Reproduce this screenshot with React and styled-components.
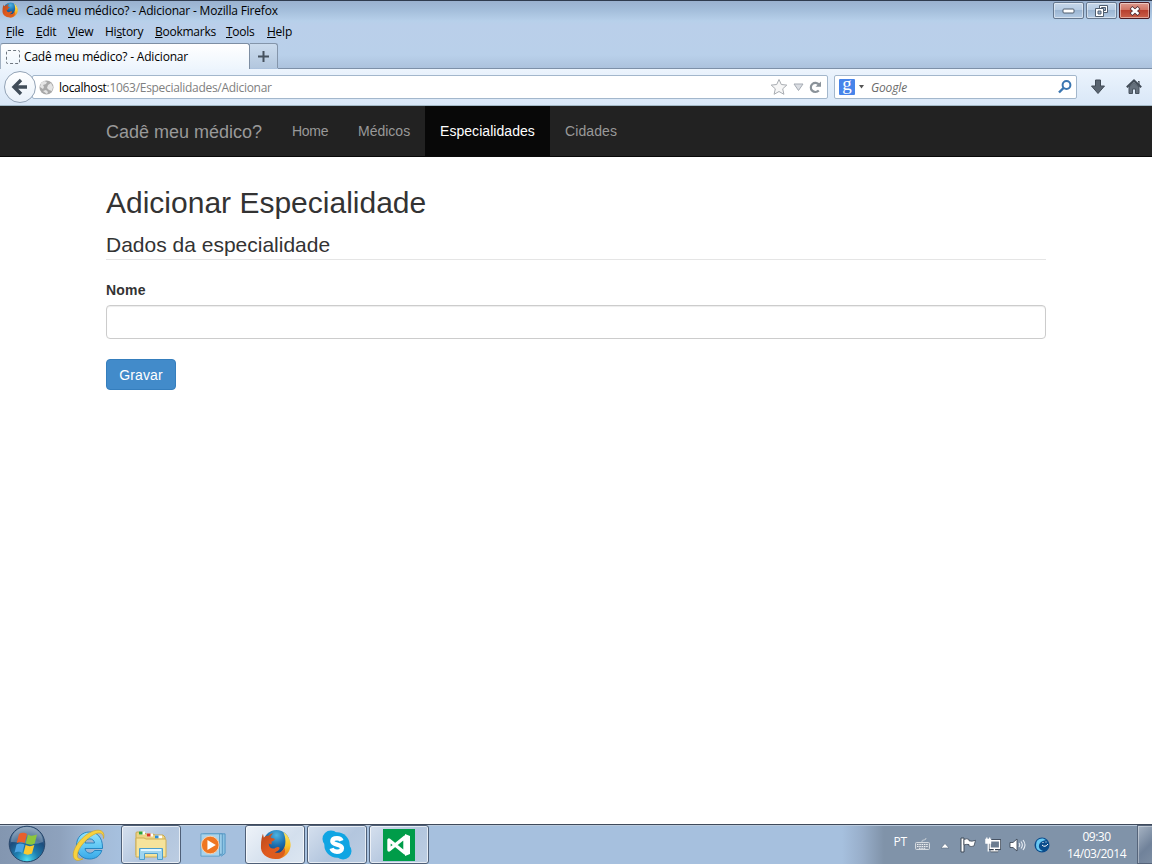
import React from "react";
import styled, { createGlobalStyle, css } from "styled-components";

const uiFont = '"Open Sans", "Noto Sans", sans-serif';
const pageFont = '"Liberation Sans", Arial, sans-serif';

const GlobalStyle = createGlobalStyle`
  * { box-sizing: border-box; }
  body { margin: 0; overflow: hidden; background: #fff; }
  svg { display: block; flex: none; }
`;

const Screen = styled.div`
  width: 1152px;
  height: 864px;
  display: flex;
  flex-direction: column;
  font-family: ${uiFont};
  font-size: 12px;
  color: #000;
  background: #fff;
`;

const Chrome = styled.header`
  height: 69px;
  flex: none;
  display: flex;
  flex-direction: column;
  border-top: 1px solid #2f3b4e;
  background: linear-gradient(#9ab1cf 0, #a2bcd9 8px, #b7d0ea 20px, #bacfea 24px, #b9d0ea 54px, #abc1dc 68px);
`;

const TitleBar = styled.div`
  height: 21px;
  display: flex;
  align-items: flex-start;
  padding: 1px 2px 0;
`;

const Text = styled.span`
  white-space: nowrap;
  font-size: 12px;
  letter-spacing: ${(p) => p.$track ?? -0.18}px;
  line-height: 16px;
`;

const WindowTitle = styled(Text)`
  margin: 1px auto 0 8px;
`;

const WindowButtons = styled.div`
  display: flex;
  gap: 2px;
`;

const WindowButton = styled.div`
  width: 31px;
  height: 17px;
  display: flex;
  align-items: center;
  justify-content: center;
  border: 1px solid ${(p) => (p.$close ? "#4c1b22" : "#66788f")};
  border-radius: 2px;
  box-shadow: inset 0 0 0 1px rgba(255, 255, 255, 0.45);
  background: ${(p) =>
    p.$close
      ? "linear-gradient(#dd9a8e 0, #cf7261 48%, #b8402f 50%, #c9604a 100%)"
      : "linear-gradient(#c6d7ea 0, #b4cae2 48%, #9cb6d3 50%, #b3cae3 100%)"};
`;

const MenuBar = styled.nav`
  height: 21px;
  display: flex;
  align-items: center;
  padding: 0 0 2px 6px;
`;

const MenuItem = styled(Text)`
  width: ${(p) => p.$width}px;
  u { text-underline-offset: 1px; text-decoration-thickness: 1px; }
`;

const TabStrip = styled.div`
  height: 26px;
  display: flex;
  align-items: stretch;
`;

const Tab = styled.div`
  width: 250px;
  display: flex;
  align-items: center;
  padding: 1px 0 0 5px;
  gap: 4px;
  border: 1px solid #7d8ea3;
  border-left-color: #a2b1c3;
  border-bottom: 0;
  border-radius: 3px 3px 0 0;
  background: linear-gradient(#fff, #edf5fd);
`;

const Favicon = styled.div`
  width: 14px;
  height: 14px;
  border: 1px dashed #6f7780;
  border-radius: 2px;
`;

const NewTab = styled.div`
  width: 28px;
  height: 25px;
  display: flex;
  align-items: center;
  justify-content: center;
  border: 1px solid #8495aa;
  border-left: 0;
  border-bottom: 0;
  border-radius: 0 3px 0 0;
  background: linear-gradient(#cbdbed, #b3c7de);
`;

const Toolbar = styled.div`
  height: 37px;
  flex: none;
  display: flex;
  align-items: center;
  padding: 0 10px 0 4px;
  background: linear-gradient(#ecf4fd, #d9e7f7);
  border-bottom: 1px solid #a3b9c6;
  background-clip: padding-box;
`;

const ChromeEdge = styled.div`
  height: 1px;
  margin: -1px 0 0 278px;
  background: #7d90a8;
`;

const BackButton = styled.div`
  width: 32px;
  height: 32px;
  flex: none;
  z-index: 1;
  display: flex;
  align-items: center;
  justify-content: center;
  border: 1px solid #93a3b6;
  border-radius: 50%;
  background: linear-gradient(#fff, #e9f1fa);
`;

const Field = styled.div`
  height: 24px;
  display: flex;
  align-items: center;
  border: 1px solid #a3b7cc;
  border-radius: 2px;
  background: #fff;
`;

const UrlField = styled(Field)`
  width: 796px;
  margin-left: -4px;
  padding: 0 3px 0 6px;
  color: #808080;
  b { font-weight: 400; color: #000; }
`;

const UrlText = styled(Text)`
  margin: 2px auto 0 5px;
`;

const SearchField = styled(Field)`
  width: 243px;
  margin-left: 6px;
  padding: 0 4px;
`;

const SearchHint = styled(Text)`
  margin: 2px auto 0 7px;
  font-style: italic;
  color: #6b6b6b;
`;

const EngineBadge = styled.span`
  width: 16px;
  height: 16px;
  margin-right: 4px;
  border-radius: 1px;
  background: #4784ea;
  color: #fff;
  font: 19px/10px "Liberation Serif", serif;
  text-align: center;
`;

const ToolbarIcons = styled.div`
  display: flex;
  gap: 20px;
  margin-left: auto;
`;

const Navbar = styled.nav`
  height: 51px;
  flex: none;
  display: flex;
  padding-left: 106px;
  background: #222;
  border-bottom: 1px solid #080808;
  font-family: ${pageFont};
  color: #999;
`;

const Brand = styled.span`
  width: 171px;
  font-size: 18px;
  line-height: 52px;
  height: 50px;
  white-space: nowrap;
`;

const NavItem = styled.span`
  padding: 0 15px;
  width: ${(p) => p.$width}px;
  font-size: 14px;
  line-height: 50px;
  letter-spacing: ${(p) => p.$track || 0}px;
  white-space: nowrap;
  ${(p) => p.$active && css`background: #080808; color: #fff;`}
`;

const Page = styled.main`
  flex: 1;
  padding: 29px 106px 0;
  font-family: ${pageFont};
  color: #333;
`;

const Heading = styled.h2`
  margin: 0 0 10px;
  font-size: 30px;
  font-weight: 400;
  line-height: 33px;
`;

const Legend = styled.div`
  height: 31px;
  margin-bottom: 20px;
  padding-top: 1px;
  font-size: 21px;
  line-height: 30px;
  border-bottom: 1px solid #e5e5e5;
`;

const Label = styled.label`
  display: block;
  margin-bottom: 5px;
  font-size: 14px;
  font-weight: 700;
  line-height: 20px;
  letter-spacing: 0.2px;
`;

const Input = styled.input`
  display: block;
  width: 100%;
  height: 34px;
  padding: 6px 12px;
  border: 1px solid #ccc;
  border-radius: 4px;
  box-shadow: inset 0 1px 1px rgba(0, 0, 0, 0.075);
`;

const SubmitButton = styled.button`
  width: 70px;
  height: 31px;
  margin-top: 20px;
  padding: 0;
  border: 1px solid #357ebd;
  border-radius: 4px;
  background: #428bca;
  color: #fff;
  font: 14px/20px ${pageFont};
  letter-spacing: 0.15px;
`;

const Taskbar = styled.footer`
  height: 40px;
  flex: none;
  display: flex;
  border-top: 1px solid #3f4a5b;
  box-shadow: inset 0 1px 0 #b9c9db;
  background: linear-gradient(90deg, #8396b0 0, #8ea2bd 60px, #a3bbd8 100px, #a6c0de 120px, #a6c0de 842px, #98aeca 862px, #8093a9 884px, #8093a9 100%);
`;

const TaskSlot = styled.div`
  width: 60px;
  margin-right: 2px;
  display: flex;
  align-items: center;
  justify-content: center;
  ${(p) =>
    p.$open &&
    css`
      border: 1px solid #4f6078;
      border-radius: 3px;
      box-shadow: inset 0 0 0 1px rgba(255, 255, 255, 0.65);
      background: ${p.$active
        ? "linear-gradient(135deg, #eef3f9, #d3dfed 60%, #dce6f1)"
        : "linear-gradient(135deg, #d5e0ee, #b3c6de 55%, #bccde2)"};
    `}
`;

const StartSlot = styled.div`
  width: 59px;
  padding: 0 0 0 8px;
`;

const Tray = styled.div`
  display: flex;
  align-items: center;
  margin-left: auto;
  color: #fff;
`;

const Language = styled(Text)`
  margin-bottom: 5px;
`;

const TrayIcons = styled.div`
  display: flex;
  align-items: center;
  gap: 8px;
  margin: 0 7px 0 8px;
`;

const Clock = styled.div`
  width: 80px;
  display: flex;
  flex-direction: column;
  align-items: center;
  padding: 2px 1px 0 0;
  gap: 1px;
`;

const ShowDesktop = styled.div`
  width: 15px;
  align-self: stretch;
  border: 1px solid #55647a;
  border-right: 0;
  box-shadow: inset 1px 1px 0 rgba(255, 255, 255, 0.35);
  background: linear-gradient(135deg, #a7b4c4, #70829a 60%, #7c8da3);
`;

const FirefoxIcon = ({ size }) => (
  <svg width={size} height={size} viewBox="0 0 32 32">
    <defs>
      <radialGradient id="globe" cx=".5" cy=".2" r=".75">
        <stop offset="0" stopColor="#4db4e2" />
        <stop offset=".5" stopColor="#1d70b0" />
        <stop offset="1" stopColor="#123a73" />
      </radialGradient>
      <linearGradient id="fox" x1="0" y1="0" x2="1" y2="1">
        <stop offset="0" stopColor="#b8481c" />
        <stop offset=".5" stopColor="#e05a1f" />
        <stop offset="1" stopColor="#d9601c" />
      </linearGradient>
      <linearGradient id="flame" x1="0" y1="0" x2="0" y2="1">
        <stop offset="0" stopColor="#ffe866" />
        <stop offset=".5" stopColor="#fbc62a" />
        <stop offset="1" stopColor="#e8701b" />
      </linearGradient>
    </defs>
    <circle cx="17" cy="14.500" r="13.500" fill="url(#globe)" />
    <path d="M24 3c6 4 9 11 7 17-2 7-8 11-15 11l-3-4c8-1 12-5 13-11 .6-5 0-9-2-13z" fill="url(#flame)" />
    <path d="M3 5l1 4c1-1.500 3-2.500 5-2 1-1.500 3-2.500 5-2.500-2 1.500-3 3-3 4.500l4 1c1 1-1 2-3 3v3l-3-1c0 4 3 6 6 5 2-1 3-2 5-1 1 1-1 4-5 5 5 2 9-1 10-5 3 6-2 12-9 12C7 31 0 25 1 17c0-5 1-9 2-12z" fill="url(#fox)" />
  </svg>
);

const StartOrb = () => (
  <svg width="38" height="38" viewBox="0 0 38 38">
    <defs>
      <radialGradient id="orb" cx=".5" cy=".95" r=".9">
        <stop offset="0" stopColor="#4fe0f2" />
        <stop offset=".35" stopColor="#1e7fb0" />
        <stop offset=".7" stopColor="#1d4c7c" />
        <stop offset="1" stopColor="#6d8aa8" />
      </radialGradient>
    </defs>
    <circle cx="19" cy="19" r="17.800" fill="url(#orb)" stroke="#27466a" />
    <path d="M3 17a16 15 0 0 1 32 0c-9 4-22 0-32 0z" fill="#fff" opacity=".25" />
    <path d="M11 9c3-2 6-1 8 0l-2.300 9c-3-1.300-5-1.300-8 0z" fill="#e9602c" />
    <path d="M20 9.500c3 2 6 1 9 0l-2.300 9c-3 2-6 1-9 0z" fill="#8cc63e" />
    <path d="M8.500 19.500c3-1.500 5.500-1 8 0l-2.300 8.500c-2-1-4.500-2-7.700 0z" fill="#4ba3e2" />
    <path d="M17.600 20c3 1.500 5.500 1.500 8.700 0L24 28.500c-3 1.500-5.500 1.500-8.500 0z" fill="#fbc92f" />
  </svg>
);

const ExplorerE = () => (
  <svg width="34" height="34" viewBox="0 0 34 34">
    <defs>
      <linearGradient id="ie" x1="0" y1="2" x2="0" y2="32" gradientUnits="userSpaceOnUse">
        <stop offset=".1" stopColor="#93e3fb" />
        <stop offset=".6" stopColor="#5cc4f4" />
        <stop offset="1" stopColor="#35a6e6" />
      </linearGradient>
    </defs>
    <path fillRule="evenodd" d="M4.500 17.500C4.500 9.500 10 4 17.500 4S30.500 9.500 30.500 19v1.500H13c.5 5 7 6.500 9.500 2h7.300C28 28 23.500 31 17.500 31 10 31 4.500 25.500 4.500 17.500zM13 15h9.500c-.5-5.500-9-5.500-9.500 0z" fill="url(#ie)" stroke="#1d7fbd" strokeWidth=".9" />
    <path d="M31.500 10.500C34 1.500 25-1 14 7 3 15.500-1.500 27 3 31.500c2 1.700 5 1 8-.7-4 .8-6.300-.8-5.500-4.800 1-6 8-14.500 15.500-19 6-3.500 10.500-2.500 10.500 3.500z" fill="#f8d23f" stroke="#cf9f20" strokeWidth=".6" />
  </svg>
);

const FolderIcon = () => (
  <svg width="34" height="30" viewBox="0 0 34 30">
    <path d="M2 3q0-1 1-1h7l2 2h7l2 1h8l2 2v18H2z" fill="#ecd384" stroke="#c9a850" />
    <path d="M5 3h6M13 5h6M21 7h7" stroke="#fff" strokeWidth="3" />
    <path d="M5 3h3.500" stroke="#2ca33a" strokeWidth="3" />
    <path d="M13 5h3.500" stroke="#d8392b" strokeWidth="3" />
    <path d="M21 7h3.500" stroke="#2f8fd8" strokeWidth="3" />
    <path d="M2 8h8l2 1h19q1 0 1 1v17H2z" fill="#f6e39b" stroke="#cfae55" />
    <path d="M5.500 29.500V18.500h23v11h-5v-6h-13v6z" fill="#9fd5f0" stroke="#4d9fcd" />
    <path d="M7 20h20" stroke="#e2f6ff" strokeWidth="2" />
  </svg>
);

const MediaIcon = () => (
  <svg width="28" height="26" viewBox="0 0 28 28">
    <path d="M5 2h22v21l-4 3z" fill="#8cc4e4" stroke="#4f93c2" />
    <path d="M3 2h21v22H3z" fill="#9bcde9" stroke="#5594bf" />
    <path d="M1 2h20v24H1z" fill="#a9d3ec" stroke="#5f9fc7" />
    <circle cx="11" cy="14" r="9.500" fill="#ef7622" stroke="#fbd2ae" />
    <path d="M8 8.500v11l9-5.500z" fill="#fff" />
  </svg>
);

const SkypeIcon = () => (
  <svg width="30" height="30" viewBox="0 0 32 32">
    <circle cx="9.500" cy="9.500" r="9" fill="#10a5e3" />
    <circle cx="22.500" cy="22.500" r="9" fill="#10a5e3" />
    <circle cx="16" cy="16" r="13.500" fill="#10a5e3" />
    <path d="M20.800 11.500C20 9.200 18 8.800 16 8.800c-3 0-5 1.200-5 3.200 0 4.800 10.300 2.500 10.300 7.500 0 2.500-2.500 3.700-5.300 3.700s-5-.8-5.800-3.500" fill="none" stroke="#fff" strokeWidth="4.600" />
  </svg>
);

const StudioIcon = () => (
  <svg width="32" height="32" viewBox="0 0 32 32">
    <path d="M0 0h32v32H0z" fill="#009c49" />
    <path d="M6 11v10L22 8v16z" fill="none" stroke="#fff" strokeWidth="3.400" strokeLinejoin="round" />
    <path d="M22 5l5 2v18l-5 2z" fill="#fff" />
  </svg>
);

const TrayGlyphs = () => (
  <TrayIcons>
    <svg width="16" height="13" viewBox="0 0 16 13">
      <path d="M7 4.500V3q0-1 2-1t2-2" fill="none" stroke="#c5ccd4" />
      <rect x=".5" y="4.500" width="14" height="7" rx="1" fill="#8d9aaa" stroke="#d4dae0" />
      <path d="M2 6.500h11M2 8.500h11M4 10.300h7" stroke="#eef1f4" strokeDasharray="1.500 .8" />
    </svg>
    <svg width="12" height="8" viewBox="0 0 12 8"><path d="M2 7l4-4.500L10 7z" fill="#fff" stroke="#59697d" strokeWidth=".6" /></svg>
    <svg width="17" height="16" viewBox="-1 0 17 16">
      <path d="M1 1h3v14H1z" fill="#fff" stroke="#3d4857" />
      <path d="M4 2.500q3-1.500 5 0v1.300q3 1 6.500-.5L14 9q-3 1-5 0V7.500Q6 7 4 8z" fill="#fff" stroke="#3d4857" strokeWidth=".8" />
    </svg>
    <svg width="17" height="17" viewBox="-1 0 18 17">
      <path d="M5.500 4.500h10v8h-10zM10 12.500V15M6 15.300h8" fill="#6b7c90" stroke="#333e4c" strokeWidth="3" />
      <path d="M5.500 4.500h10v8h-10zM10 12.500V15M6 15.300h8" fill="#6b7c90" stroke="#fff" strokeWidth="1.400" />
      <path d="M1 3h5v4H1zM2 3V1M5 3V1M3.500 7v9" fill="#fff" stroke="#fff" strokeWidth="1.300" />
    </svg>
    <svg width="17" height="16" viewBox="0 0 17 16">
      <path d="M1 5.500h3L8 2v12l-4-3.500H1z" fill="#fff" stroke="#333e4c" strokeWidth=".8" />
      <path d="M10 6q1.500 2 0 4M12 4.500q2.700 3.500 0 7M14 3q4 5 0 10" fill="none" stroke="#e7edf4" strokeWidth="1.100" />
    </svg>
    <svg width="16" height="16" viewBox="0 0 16 16">
      <circle cx="8" cy="8" r="7.500" fill="#0a4c8c" />
      <path d="M9 1.500Q2 1 2 8t7 6Q4 12 5 8t7-5z" fill="#69c8f2" />
      <path d="M8 8q3 3 6-1" fill="none" stroke="#fff" />
      <path d="M9 5v1M12 4.500v1" stroke="#fff" />
    </svg>
  </TrayIcons>
);

const menus = [
  ["", "F", "ile", 30],
  ["", "E", "dit", 32],
  ["", "V", "iew", 37],
  ["Hi", "s", "tory", 50],
  ["", "B", "ookmarks", 71],
  ["", "T", "ools", 41],
  ["", "H", "elp", 40],
];

export default function App() {
  return (
    <Screen>
      <GlobalStyle />
      <Chrome>
        <TitleBar>
          <FirefoxIcon size={16} />
          <WindowTitle>Cadê meu médico? - Adicionar - Mozilla Firefox</WindowTitle>
          <WindowButtons>
            <WindowButton>
              <svg width="13" height="6"><rect x="1" y="1" width="11" height="4" rx="1" fill="#fff" stroke="#4f5d6e" /></svg>
            </WindowButton>
            <WindowButton>
              <svg width="13" height="12" viewBox="0 0 13 12">
                <path d="M4.500.5h8v7h-8z" fill="#fff" stroke="#4f5d6e" />
                <path d="M6.500 2.500h4v3h-4z" fill="#9cb3cf" stroke="#4f5d6e" />
                <path d="M.5 3.500h8v8h-8z" fill="#fff" stroke="#4f5d6e" />
                <path d="M3 6h3v3H3z" fill="#9cb3cf" stroke="#4f5d6e" />
              </svg>
            </WindowButton>
            <WindowButton $close>
              <svg width="12" height="10" viewBox="0 0 12 10">
                <path d="M2 1.500l8 7M10 1.500l-8 7" stroke="#4b2a31" strokeWidth="4" />
                <path d="M2.500 2l7 6M9.500 2l-7 6" stroke="#fff" strokeWidth="2.400" />
              </svg>
            </WindowButton>
          </WindowButtons>
        </TitleBar>
        <MenuBar>
          {menus.map(([before, key, after, width]) => (
            <MenuItem key={after} $width={width} $track={-0.25}>{before}<u>{key}</u>{after}</MenuItem>
          ))}
        </MenuBar>
        <TabStrip>
          <Tab>
            <Favicon />
            <Text>Cadê meu médico? - Adicionar</Text>
          </Tab>
          <NewTab>
            <svg width="11" height="11"><path d="M5.500 0v11M0 5.500h11" stroke="#46525f" strokeWidth="2" /></svg>
          </NewTab>
        </TabStrip>
        <ChromeEdge />
      </Chrome>
      <Toolbar>
        <BackButton>
          <svg width="18" height="18" viewBox="0 0 18 18">
            <path d="M10 2L3 9l7 7M3.500 9H16" fill="none" stroke="#414d59" strokeWidth="3.400" />
          </svg>
        </BackButton>
        <UrlField>
          <svg width="15" height="15" viewBox="0 0 15 15">
            <circle cx="7.500" cy="7.500" r="7" fill="#a8a8a8" />
            <path d="M2 3l3-2 3 1-1 2-3 1 1 2-1 2-3-2zM9 5l3-2 2 4-1 4-3-1-2-2zM4 11l3-1 2 2-1 2z" fill="#e4e4e4" />
          </svg>
          <UrlText $track={-0.3}><b>localhost</b>:1063/Especialidades/Adicionar</UrlText>
          <svg width="54" height="18" viewBox="0 0 54 18">
            <path d="M9 1.500l2.300 5 5.500.6-4.100 3.700 1.200 5.500L9 13.500l-4.900 2.800 1.200-5.500L1.200 7.100l5.500-.6z" fill="#f7f7f7" stroke="#a9adb2" />
            <path d="M24 6h9l-4.500 6.500z" fill="#dadde2" stroke="#a5abb3" />
            <path d="M48.800 12.500a4.600 4.600 0 1 1 .2-6" fill="none" stroke="#8a9299" strokeWidth="2.200" />
            <path d="M51 3.500v5.300h-5.500z" fill="#8a9299" />
          </svg>
        </UrlField>
        <SearchField>
          <EngineBadge>g</EngineBadge>
          <svg width="5" height="4"><path d="M0 0h5L2.500 3.500z" fill="#555" /></svg>
          <SearchHint $track={-0.15}>Google</SearchHint>
          <svg width="14" height="14" viewBox="0 0 14 14">
            <circle cx="8.500" cy="5" r="3.900" fill="none" stroke="#3a76b1" strokeWidth="2" />
            <path d="M5.500 8L1 12.500" stroke="#3a76b1" strokeWidth="2.400" />
          </svg>
        </SearchField>
        <ToolbarIcons>
          <svg width="16" height="16" viewBox="0 0 16 16"><path d="M5.500 1h5v6h4L8 14.500 1.500 7h4z" fill="#5a6571" stroke="#414b56" /></svg>
          <svg width="16" height="16" viewBox="0 0 16 16">
            <path d="M3 8l5-4.500L13 8v6.500H9.500V10h-3v4.500H3z" fill="#66717d" stroke="#48535e" />
            <path d="M.8 8.300L8 1.500l7.200 6.800" fill="none" stroke="#414b56" strokeWidth="2" />
            <path d="M12 2.500h1V6" fill="none" stroke="#414b56" strokeWidth="1.200" />
          </svg>
        </ToolbarIcons>
      </Toolbar>
      <Navbar>
        <Brand>Cadê meu médico?</Brand>
        <NavItem $width={66} $track={-0.3}>Home</NavItem>
        <NavItem $width={82}>Médicos</NavItem>
        <NavItem $width={125} $active $track={0.05}>Especialidades</NavItem>
        <NavItem $width={82} $track={0.1}>Cidades</NavItem>
      </Navbar>
      <Page>
        <Heading>Adicionar Especialidade</Heading>
        <Legend>Dados da especialidade</Legend>
        <Label htmlFor="nome">Nome</Label>
        <Input id="nome" />
        <SubmitButton>Gravar</SubmitButton>
      </Page>
      <Taskbar>
        <StartSlot><StartOrb /></StartSlot>
        <TaskSlot><ExplorerE /></TaskSlot>
        <TaskSlot $open><FolderIcon /></TaskSlot>
        <TaskSlot><MediaIcon /></TaskSlot>
        <TaskSlot $open $active><FirefoxIcon size={31} /></TaskSlot>
        <TaskSlot $open><SkypeIcon /></TaskSlot>
        <TaskSlot $open><StudioIcon /></TaskSlot>
        <Tray>
          <Language>PT</Language>
          <TrayGlyphs />
          <Clock>
            <Text $track={-0.5}>09:30</Text>
            <Text $track={-0.45}>14/03/2014</Text>
          </Clock>
          <ShowDesktop />
        </Tray>
      </Taskbar>
    </Screen>
  );
}
